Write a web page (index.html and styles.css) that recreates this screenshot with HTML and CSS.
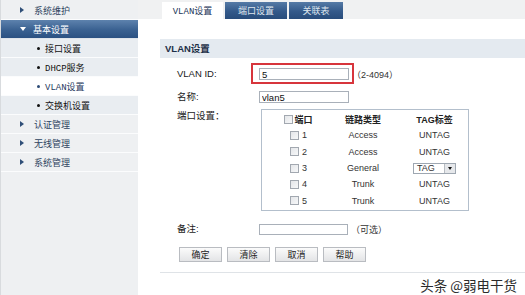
FILE: index.html
```html
<!DOCTYPE html>
<html lang="zh">
<head>
<meta charset="utf-8">
<title>VLAN设置</title>
<link rel="stylesheet" href="styles.css">
</head>
<body>
<div class="app">
  <aside class="sidebar">
    <ul class="menu">
      <li class="group"><span class="arrow"></span>系统维护</li>
      <li class="group open"><span class="arrow"></span>基本设置</li>
      <li class="sub"><span class="dot"></span>接口设置</li>
      <li class="sub"><span class="dot"></span>DHCP服务</li>
      <li class="sub current"><span class="dot"></span>VLAN设置</li>
      <li class="sub"><span class="dot"></span>交换机设置</li>
      <li class="group"><span class="arrow"></span>认证管理</li>
      <li class="group"><span class="arrow"></span>无线管理</li>
      <li class="group"><span class="arrow"></span>系统管理</li>
    </ul>
  </aside>
  <main class="main">
    <nav class="tabs">
      <span class="tab tab-vlan active">VLAN设置</span>
      <span class="tab tab-port">端口设置</span>
      <span class="tab tab-map">关联表</span>
    </nav>
    <section class="panel">
      <h2 class="panel-title">VLAN设置</h2>
      <div class="form">
        <div class="row r1">
          <label class="lbl">VLAN ID:</label>
          <span class="mark"><input class="txt" type="text" value="5"></span>
          <span class="hint">（2-4094）</span>
        </div>
        <div class="row r2">
          <label class="lbl">名称:</label>
          <input class="txt" type="text" value="vlan5">
        </div>
        <div class="row r3">
          <label class="lbl">端口设置：</label>
          <div class="ports">
            <div class="cell head"><span class="cb"></span><span class="gap1">端口</span></div>
            <div class="cell head">链路类型</div>
            <div class="cell head c3">TAG标签</div>

            <div class="cell"><span class="cb"></span><span class="num">1</span></div>
            <div class="cell">Access</div>
            <div class="cell c3">UNTAG</div>

            <div class="cell"><span class="cb"></span><span class="num">2</span></div>
            <div class="cell">Access</div>
            <div class="cell c3">UNTAG</div>

            <div class="cell"><span class="cb"></span><span class="num">3</span></div>
            <div class="cell">General</div>
            <div class="cell c3"><span class="sel"><span class="sel-val">TAG</span><span class="sel-btn"><span class="tri"></span></span></span></div>

            <div class="cell"><span class="cb"></span><span class="num">4</span></div>
            <div class="cell">Trunk</div>
            <div class="cell c3">UNTAG</div>

            <div class="cell"><span class="cb"></span><span class="num">5</span></div>
            <div class="cell">Trunk</div>
            <div class="cell c3">UNTAG</div>
          </div>
        </div>
        <div class="row r4">
          <label class="lbl">备注:</label>
          <input class="txt txt-note" type="text" value="">
          <span class="hint">（可选）</span>
        </div>
        <div class="btns">
          <button class="btn">确定</button>
          <button class="btn">清除</button>
          <button class="btn">取消</button>
          <button class="btn">帮助</button>
        </div>
      </div>
      <hr class="sep">
      <div class="watermark">头条 @弱电干货</div>
    </section>
  </main>
</div>
</body>
</html>
```
FILE: styles.css
```css
* { box-sizing: border-box; margin: 0; padding: 0; }
html, body { width: 525px; height: 295px; overflow: hidden; }
body {
  font-family: "Liberation Sans", "Noto Sans CJK SC", sans-serif;
  font-size: 9.5px;
  color: #222;
  background: #fff;
}
.app { display: flex; height: 295px; }

/* sidebar */
.sidebar {
  width: 138px;
  flex: none;
  background: #eef0f2;
  border-left: 1px solid #d8dbde;
  padding-top: 1px;
}
.menu { list-style: none; }
.menu li {
  height: 19px;
  display: flex;
  align-items: center;
  border-bottom: 1px solid #fbfcfd;
  font-family: "Liberation Mono", "Noto Sans CJK SC", monospace;
  font-size: 9px;
  color: #111;
}
.menu .group { padding-left: 19px; color: #2d4360; }
.menu .group .arrow {
  width: 0; height: 0;
  border-left: 4px solid #2f4f78;
  border-top: 3.5px solid transparent;
  border-bottom: 3.5px solid transparent;
  margin-right: 10px;
}
.menu .group.open {
  color: #fff;
  background: linear-gradient(#5d82ad, #3a6191 55%, #2b5182);
  border-bottom-color: #dfe4ea;
}
.menu .group.open .arrow {
  border-left: 3.5px solid transparent;
  border-right: 3.5px solid transparent;
  border-top: 4px solid #fff;
  border-bottom: 0;
  margin-right: 7px;
}
.menu .sub { padding-left: 36px; background: #e9edf1; }
.menu .sub .dot {
  width: 3px; height: 3px;
  border-radius: 50%;
  background: #111;
  margin-right: 5px;
}
.menu .sub.current { background: #fff; color: #1f3a60; }
.menu .sub.current .dot { background: #2b4a75; }

/* main */
.main { flex: 1; display: flex; flex-direction: column; min-width: 0; }
.tabs {
  height: 19px;
  flex: none;
  background: #f0f1f2;
  display: flex;
  align-items: flex-end;
  gap: 2px;
  padding-left: 24px;
}
.tab {
  height: 17px;
  display: flex;
  align-items: center;
  justify-content: center;
  font-family: "Noto Sans CJK SC", sans-serif;
  font-size: 9px;
  color: #dfe6ee;
  background: linear-gradient(#557aa6, #33598a 55%, #284c7b);
}
.tab.active {
  background: #fff;
  color: #1c3658;
  font-family: "Liberation Mono", "Noto Sans CJK SC", monospace;
}
.tab-vlan { width: 61px; }
.tab-port { width: 62px; }
.tab-map { width: 54px; }

.panel { margin-left: 22px; margin-top: 20px; display: flex; flex-direction: column; }
.panel-title {
  height: 19px;
  line-height: 19px;
  background: #e4eaf0;
  padding-left: 5px;
  font-size: 9.5px;
  font-weight: bold;
  color: #1d2f47;
}

.form { padding-left: 17px; }
.row { display: flex; align-items: center; height: 12px; }
.lbl { width: 82px; flex: none; color: #1a1a1a; line-height: 12px; }
.r1 { margin-top: 10px; }
.r2 { margin-top: 11px; }
.r3 { margin-top: 6px; height: auto; align-items: flex-start; }
.r3 .lbl { line-height: 14px; }
.r4 { margin-top: 13px; height: 11px; }

.txt {
  width: 90px;
  height: 12px;
  border: 1px solid #a9b0b9;
  padding: 0 2px;
  font-family: "Liberation Sans", sans-serif;
  font-size: 9.5px;
  color: #111;
  background: #fff;
  outline: none;
}
.txt-note { width: 89px; height: 11px; }
.mark { position: relative; display: inline-flex; }
.mark::after {
  content: "";
  position: absolute;
  left: -8px; right: -5px; top: -5px; bottom: -4px;
  border: 2px solid #d7353c;
}
.hint { margin-left: 3px; color: #333; font-family: "Liberation Sans", "Noto Sans CJK SC", sans-serif; font-size: 9px; }

/* port table */
.ports {
  margin-left: 2px;
  width: 208px;
  border: 1px solid #b3bfcc;
  padding-top: 1px;
  padding-bottom: 1px;
  display: grid;
  grid-template-columns: 73px 56px 77px;
  grid-auto-rows: 16.3px;
  font-size: 9px;
  color: #333;
}
.cell { display: flex; align-items: center; justify-content: center; white-space: nowrap; }
.cell.c3 { padding-left: 10px; }
.cell.head { font-weight: bold; color: #222; font-family: "Liberation Sans", "Noto Sans CJK SC", sans-serif; }
.cb {
  width: 9px; height: 9px;
  border: 1px solid #a2a8b0;
  background: linear-gradient(135deg, #e4e6e9, #f7f8f9);
  flex: none;
}
.gap1 { margin-left: 1px; }
.num { margin-left: 3px; }
.sel {
  width: 43px; height: 11px;
  border: 1px solid #9ea7b1;
  background: #fff;
  display: flex;
  align-items: center;
  justify-content: space-between;
}
.sel-val { padding-left: 3px; line-height: 9px; }
.sel-btn {
  width: 11px; height: 9px;
  border-left: 1px solid #b7bcc2;
  background: #e6e8eb;
  display: flex; align-items: center; justify-content: center;
}
.tri {
  width: 0; height: 0;
  border-left: 2.5px solid transparent;
  border-right: 2.5px solid transparent;
  border-top: 3px solid #111;
}

/* buttons */
.btns { display: flex; gap: 5px; margin-top: 12px; padding-left: 2px; }
.btn {
  width: 43px; height: 15px;
  border: 1px solid #b9bcc1;
  background: linear-gradient(#fbfbfb, #e3e4e6);
  font-family: "Noto Sans CJK SC", sans-serif;
  font-size: 9px;
  color: #222;
  display: flex; align-items: center; justify-content: center;
}

.sep { border: 0; border-top: 1px solid #dfe3e7; margin-top: 10px; }
.watermark {
  margin-top: 4px;
  text-align: right;
  padding-right: 8px;
  font-family: "Noto Sans CJK SC", sans-serif;
  font-size: 13.5px;
  line-height: 16px;
  color: #2a2a2a;
}
```
